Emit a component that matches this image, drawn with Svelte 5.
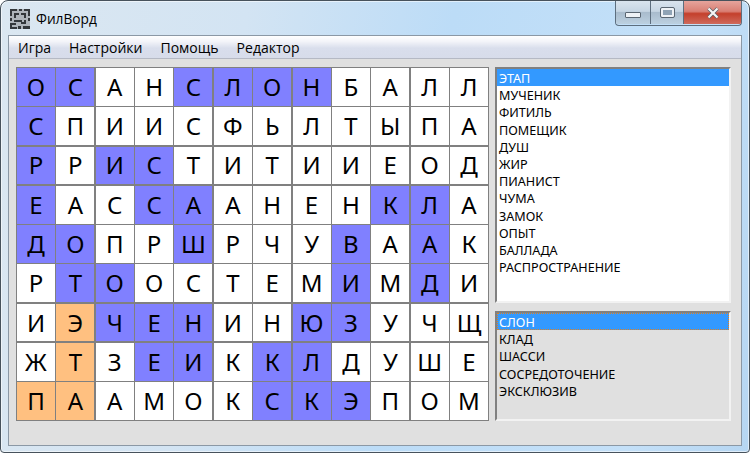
<script>
  const rows = [
    'ОСАНСЛОНБАЛЛ',
    'СПИИСФЬЛТЫПА',
    'РРИСТИТИИЕОД',
    'ЕАССААНЕНКЛА',
    'ДОПРШРЧУВААК',
    'РТООСТЕМИМДИ',
    'ИЭЧЕНИНЮЗУЧЩ',
    'ЖТЗЕИККЛДУШЕ',
    'ПААМОКСКЭПОМ'
  ];
  const blue = new Set([
    '0,0','0,1','0,4','0,5','0,6','0,7',
    '1,0',
    '2,0','2,2','2,3',
    '3,0','3,3','3,4','3,9','3,10',
    '4,0','4,1','4,4','4,8','4,10',
    '5,1','5,2','5,8','5,10',
    '6,2','6,3','6,4','6,7','6,8',
    '7,3','7,4','7,6','7,7',
    '8,6','8,7','8,8'
  ]);
  const orange = new Set(['6,1','7,1','8,0','8,1']);
  const cells = rows.flatMap((r, i) => [...r].map((ch, j) => {
    const k = i + ',' + j;
    return { ch, cls: blue.has(k) ? 'blue' : orange.has(k) ? 'orange' : '' };
  }));
  const words = ['ЭТАП','МУЧЕНИК','ФИТИЛЬ','ПОМЕЩИК','ДУШ','ЖИР','ПИАНИСТ','ЧУМА','ЗАМОК','ОПЫТ','БАЛЛАДА','РАСПРОСТРАНЕНИЕ'];
  const found = ['СЛОН','КЛАД','ШАССИ','СОСРЕДОТОЧЕНИЕ','ЭКСКЛЮЗИВ'];
  const menu = ['Игра','Настройки','Помощь','Редактор'];
</script>

<div class="window">
  <header class="titlebar">
    <svg class="appicon" width="20" height="20" viewBox="0 0 20 20" aria-hidden="true">
      <rect width="20" height="20" fill="#aeb4ba"/>
      <path d="M0 0h7v2H2v5H0zM9 0h3v2H9zM14 0h6v7h-2V2h-4zM4 4h5v2H6v3H4zM11 4h5v5h-2V6h-3zM0 9h2v3H0zM18 9h2v3h-2zM4 11h8v2H4zM14 11h2v4h-5v-2h3zM0 14h6v2H2v2h5v2H0zM8 17h3v3H8zM13 17h7v3h-7z" fill="#33373b"/>
    </svg>
    <span class="title">ФилВорд</span>
    <div class="controls">
      <div class="btn min"><span class="glyph-min"></span></div>
      <div class="btn max"><span class="glyph-max"></span></div>
      <div class="btn close">
        <svg width="14" height="12" viewBox="0 0 14 12" aria-hidden="true">
          <path d="M2.5 1.5 L11.5 10.5 M11.5 1.5 L2.5 10.5" stroke="#5a5f66" stroke-width="3.6"/>
          <path d="M2.5 1.5 L11.5 10.5 M11.5 1.5 L2.5 10.5" stroke="#f4f4f4" stroke-width="2.2"/>
        </svg>
      </div>
    </div>
  </header>

  <div class="client">
    <nav class="menubar">
      {#each menu as m}<span>{m}</span>{/each}
    </nav>
    <main class="content">
      <div class="grid">
        {#each cells as c}<div class="cell {c.cls}">{c.ch}</div>{/each}
      </div>
      <div class="side">
        <div class="list words">
          {#each words as w, i}<div class="item" class:sel={i === 0}>{w}</div>{/each}
        </div>
        <div class="list found">
          {#each found as w, i}<div class="item" class:sel={i === 0} class:focus={i === 0}>{w}</div>{/each}
        </div>
      </div>
    </main>
  </div>
</div>

<style>
  :global(body) { margin: 0; background: #fff; }
  .window {
    box-sizing: border-box;
    width: 750px;
    height: 453px;
    border: 1px solid #47525c;
    border-radius: 8px 8px 4px 4px;
    background: linear-gradient(100deg, #dbe7f1 0%, #d3e4f3 30%, #bcdcf7 55%, #c4e0f8 85%, #b6d6f2 100%);
    box-shadow: inset 0 0 0 1px rgba(255,255,255,.55);
    display: flex;
    flex-direction: column;
    padding: 0 7px 6px 7px;
    overflow: hidden;
  }
  .titlebar {
    height: 34px;
    flex: none;
    display: flex;
    align-items: flex-start;
    font-family: "Open Sans", "Noto Sans", sans-serif;
  }
  .appicon { margin: 8px 0 0 2px; flex: none; }
  .title { margin: 9px 0 0 6px; font-size: 13.7px; line-height: 18px; color: #000; }
  .controls { margin-left: auto; display: flex; height: 24px; border: 1px solid #5d6e7e; border-top: 0; border-radius: 0 0 4px 4px; overflow: hidden; }
  .btn { display: flex; align-items: center; justify-content: center; height: 23px; }
  .min, .max { background: linear-gradient(#d9e4ee 0%, #c6d5e3 45%, #a9bccd 50%, #bcd0e0 100%); border-right: 1px solid #5d6e7e; }
  .min { width: 34px; }
  .max { width: 32px; }
  .close { width: 57px; background: linear-gradient(#e5a49c 0%, #d97f74 45%, #c4402c 55%, #cf6a5c 100%); }
  .glyph-min { width: 14px; height: 4px; margin-top: 5px; background: #eef2f6; border: 1px solid #5a6672; border-radius: 1px; }
  .glyph-max { width: 9px; height: 5px; background: #8fa3b5; border: 2px solid #eef2f6; outline: 1px solid #5a6672; border-radius: 1px; }
  .client {
    flex: 1;
    min-height: 0;
    border: 1px solid #8b98a5;
    background: #e0e0e0;
    display: flex;
    flex-direction: column;
  }
  .menubar {
    height: 23px;
    flex: none;
    box-sizing: border-box;
    display: flex;
    align-items: center;
    padding-left: 9px;
    gap: 18px;
    font-family: "Open Sans", "Noto Sans", sans-serif;
    font-size: 14px;
    color: #000;
    background: linear-gradient(#ffffff 0%, #f3f4f9 25%, #d9deec 55%, #d7dcea 100%);
    border-bottom: 1px solid #b5b9c4;
  }
  .content {
    display: flex;
    padding: 8px 10px 0 7px;
    gap: 6px;
    align-items: flex-start;
  }
  .grid {
    box-sizing: border-box;
    width: 473px;
    height: 354px;
    display: grid;
    grid-template-columns: repeat(12, 1fr);
    grid-template-rows: repeat(9, 1fr);
    background: #808080;
    gap: 1.4px;
    padding: 1px;
    flex: none;
  }
  .cell {
    background: #fff;
    display: flex;
    align-items: center;
    justify-content: center;
    font-family: "Noto Sans", sans-serif;
    font-size: 24px;
    color: #000;
    line-height: 1;
  }
  .blue { background: #8080ff; }
  .orange { background: #ffc080; }
  .side { flex: 1; display: flex; flex-direction: column; gap: 8px; min-width: 0; }
  .list {
    box-sizing: border-box;
    font-family: "Noto Sans", sans-serif;
    font-size: 12.6px;
    color: #000;
    border: 2px solid #f2f2f2;
    border-top-color: #808080;
    border-left-color: #808080;
    padding: 0;
  }
  .words { height: 236px; background: #fff; }
  .found { height: 110px; background: #e0e0e0; }
  .item { height: 17.2px; line-height: 19px; padding-left: 2px; white-space: nowrap; }
  .sel { background: #3399ff; color: #fff; }
  .focus { outline: 1px dotted #e08020; outline-offset: -1px; }
</style>
